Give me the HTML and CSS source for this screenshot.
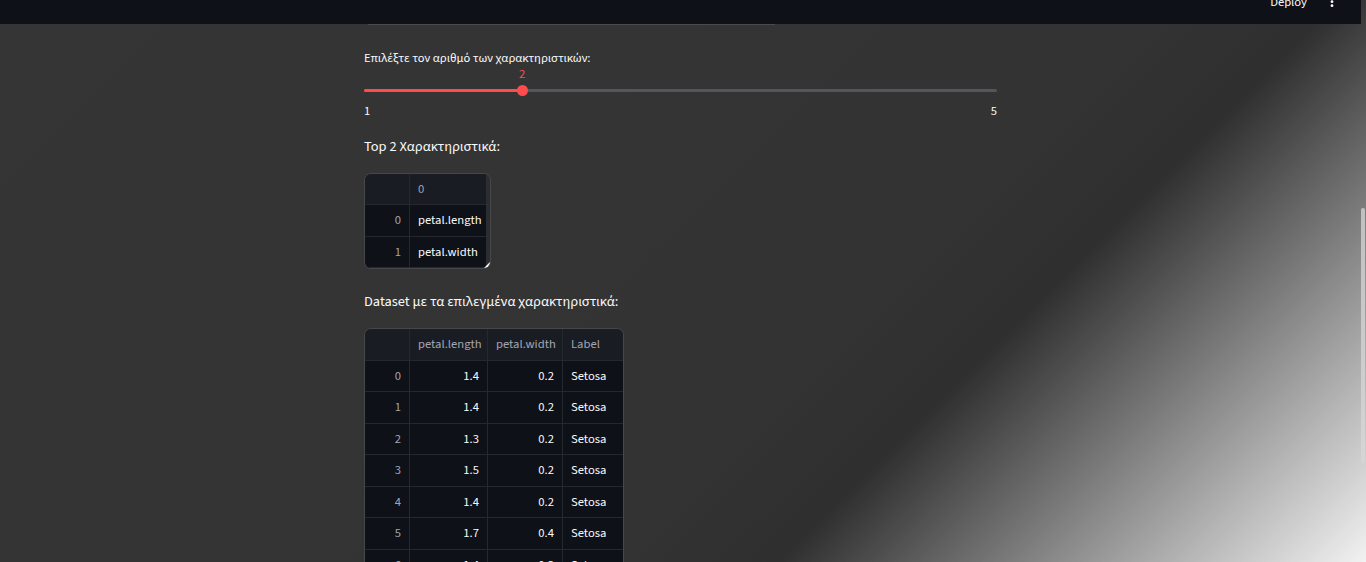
FILE: index.html
```html
<!DOCTYPE html>
<html lang="el">
<head>
<meta charset="utf-8">
<title>App</title>
<link rel="stylesheet" href="styles.css">
</head>
<body>
<div class="app">
  <header class="topbar">
    <div class="toolbar">
      <span class="deploy">Deploy</span>
      <svg class="menu" width="6" height="16" viewBox="0 0 6 16"><circle cx="3" cy="3.7" r="1.4"/><circle cx="3" cy="7.7" r="1.4"/><circle cx="3" cy="11.7" r="1.4"/></svg>
    </div>
  </header>
  <main class="block">
    <div class="rule"></div>
    <section class="slider">
      <label class="slider-label">Επιλέξτε τον αριθμό των χαρακτηριστικών:</label>
      <div class="slider-body">
        <div class="track"><div class="fill" style="width:25%"></div></div>
        <div class="thumb" style="left:25%"><span class="thumb-value">2</span></div>
      </div>
      <div class="ticks"><span>1</span><span>5</span></div>
    </section>
    <p class="text t1">Top 2 Χαρακτηριστικά:</p>
    <div class="frame small">
      <div class="grid cols-small">
        <div class="cell head idx"></div><div class="cell head last">0</div>
        <div class="cell idx">0</div><div class="cell last">petal.length</div>
        <div class="cell idx">1</div><div class="cell last">petal.width</div>
      </div>
      <span class="handle"></span>
    </div>
    <p class="text t2">Dataset με τα επιλεγμένα χαρακτηριστικά:</p>
    <div class="frame big">
      <div class="grid cols-big">
        <div class="cell head idx"></div><div class="cell head">petal.length</div><div class="cell head">petal.width</div><div class="cell head last">Label</div>
        <div class="cell idx">0</div><div class="cell num">1.4</div><div class="cell num">0.2</div><div class="cell last">Setosa</div>
        <div class="cell idx">1</div><div class="cell num">1.4</div><div class="cell num">0.2</div><div class="cell last">Setosa</div>
        <div class="cell idx">2</div><div class="cell num">1.3</div><div class="cell num">0.2</div><div class="cell last">Setosa</div>
        <div class="cell idx">3</div><div class="cell num">1.5</div><div class="cell num">0.2</div><div class="cell last">Setosa</div>
        <div class="cell idx">4</div><div class="cell num">1.4</div><div class="cell num">0.2</div><div class="cell last">Setosa</div>
        <div class="cell idx">5</div><div class="cell num">1.7</div><div class="cell num">0.4</div><div class="cell last">Setosa</div>
        <div class="cell idx">6</div><div class="cell num">1.4</div><div class="cell num">0.3</div><div class="cell last">Setosa</div>
        <div class="cell idx">7</div><div class="cell num">1.5</div><div class="cell num">0.2</div><div class="cell last">Setosa</div>
      </div>
    </div>
  </main>
  <div class="scroll-thumb"></div>
</div>
</body>
</html>
```
FILE: styles.css
```css
* { box-sizing: border-box; }
html, body { margin: 0; padding: 0; height: 100%; overflow: hidden; }
body {
  background: linear-gradient(135deg, #353535 0%, #333333 60%, #2f2f2f 69.5%, #f2f2f2 100%);
  color: #fafafa;
  font-family: "Source Sans 3", "Source Sans Pro", "Noto Sans", sans-serif;
}
.app { padding-right: 5px; height: 100%; }
.topbar { height: 24px; background: #0e1117; overflow: hidden; }
.toolbar { display: flex; justify-content: flex-end; align-items: center; gap: 22px; height: 40px; margin-top: -18px; padding-right: 26px; }
.deploy { font-size: 12.6px; color: #fafafa; }
.menu { fill: #fafafa; }
.block { width: 633px; margin: 0 auto; }
.rule { height: 1px; width: 407px; margin-left: 4px; background: #4a4a4a; }
.slider { margin-top: 23px; }
.slider-label { display: block; font-size: 12.6px; line-height: 20px; }
.slider-body { position: relative; height: 36px; display: flex; align-items: center; margin-top: 4.5px; }
.track { flex: 1; height: 3.6px; background: #55555c; border-radius: 2px; }
.fill { height: 100%; background: #ff4b4b; border-radius: 2px; }
.thumb { position: absolute; top: 12.5px; width: 11px; height: 11px; margin-left: -5.5px; border-radius: 50%; background: #ff4b4b; }
.thumb-value { position: absolute; bottom: 15px; left: 50%; transform: translateX(-50%); font-size: 12.6px; line-height: 14px; color: #ff4b4b; }
.ticks { display: flex; justify-content: space-between; font-size: 12.6px; line-height: 16px; margin-top: -6px; }
.text { margin: 0; font-size: 14.4px; line-height: 22px; }
.t1 { margin-top: 17px; }
.t2 { margin-top: 22px; }
.frame { position: relative; border: 1px solid #46474b; border-radius: 7px; overflow: hidden; background: #2c2d31; margin-top: 15px; }
.small { width: 127px; }
.big { width: 260px; }
.grid { display: grid; grid-auto-rows: 31.5px; font-size: 12.6px; }
.cols-small { grid-template-columns: 45px 76px; }
.cols-big { grid-template-columns: 45px 78px 75px 60px; }
.cell { display: flex; align-items: center; padding: 0 8px; background: #0e1117; border-right: 1px solid #262830; border-bottom: 1px solid #262830; white-space: nowrap; overflow: hidden; }
.cell.last { border-right: none; }
.cell.head { background: #1a1c24; color: #a3a6b0; }
.cell.idx { justify-content: flex-end; color: #a3a6b0; }
.cell.num { justify-content: flex-end; }
.handle { position: absolute; right: 0; bottom: 0; width: 0; height: 0; border-left: 6px solid transparent; border-bottom: 6px solid #fafafa; }
.scroll-thumb { position: fixed; right: 1px; top: 208px; width: 4px; height: 255px; border-radius: 2px; background: rgba(215,215,215,0.75); }
```
